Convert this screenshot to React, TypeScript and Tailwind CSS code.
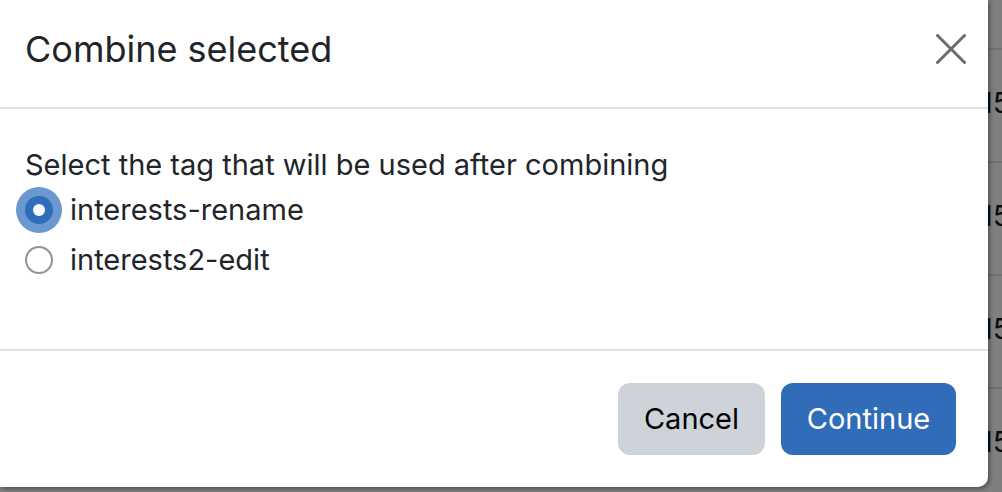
import React from "react";

const rows = ["15", "15", "15", "15"];

function CloseIcon() {
  return (
    <svg width="30" height="30" viewBox="0 0 30 30" fill="none" xmlns="http://www.w3.org/2000/svg">
      <path d="M1.5 1.5l27 27M28.5 1.5l-27 27" stroke="#6c6c6c" strokeWidth="3" strokeLinecap="round" />
    </svg>
  );
}

function Radio({ checked }: { checked?: boolean }) {
  if (checked) {
    return (
      <span className="flex items-center justify-center w-[28px] h-[28px] rounded-full bg-[#2f6cb9] ring-[9px] ring-[#6b98d1] shrink-0">
        <span className="w-[12px] h-[12px] rounded-full bg-white" />
      </span>
    );
  }
  return <span className="w-[28px] h-[28px] rounded-full border-2 border-[#8f9297] bg-white shrink-0" />;
}

export default function App() {
  const options = [
    { label: "interests-rename", checked: true },
    { label: "interests2-edit", checked: false },
  ];

  return (
    <div className="relative w-[1002px] h-[492px] overflow-hidden bg-[#7f7f7f] font-['Inter',sans-serif]">
      {/* Page behind the backdrop */}
      <div className="flex flex-col">
        <div className="h-[50px] border-b-2 border-[#717171]" />
        {rows.map((r, i) => (
          <div key={i} className="h-[113px] flex items-center border-b-2 border-[#717171] pl-[981px] pb-[6px] text-[29px] text-[#0c0c0c] whitespace-nowrap">
            {r}
          </div>
        ))}
      </div>

      {/* Modal */}
      <div className="absolute left-0 top-0 w-[988px] h-[487px] bg-white rounded-br-[10px] shadow-[2px_2px_4px_rgba(0,0,0,0.35)] flex flex-col text-[#212529]">
        {/* Header */}
        <div className="h-[109px] flex items-center justify-between pl-[25px] pr-[22px] pb-[10px] border-b-2 border-[#dee2e6] shrink-0">
          <h2 className="text-[36px] leading-none font-normal">Combine selected</h2>
          <button className="w-[30px] h-[30px] flex items-center justify-center">
            <CloseIcon />
          </button>
        </div>

        {/* Body */}
        <div className="h-[242px] pl-[25px] pt-[36px] border-b-2 border-[#dee2e6] shrink-0">
          <p className="text-[29px] leading-[40px]">Select the tag that will be used after combining</p>
          {options.map((o) => (
            <label key={o.label} className="h-[50px] flex items-center gap-[17px]">
              <Radio checked={o.checked} />
              <span className="text-[29px]">{o.label}</span>
            </label>
          ))}
        </div>

        {/* Footer */}
        <div className="flex-1 flex items-center justify-end gap-[16px] pr-[32px]">
          <button className="w-[147px] h-[72px] rounded-[12px] bg-[#ced3d9] text-black text-[29px]">Cancel</button>
          <button className="w-[175px] h-[72px] rounded-[12px] bg-[#306cb8] text-white text-[29px]">Continue</button>
        </div>
      </div>
    </div>
  );
}
